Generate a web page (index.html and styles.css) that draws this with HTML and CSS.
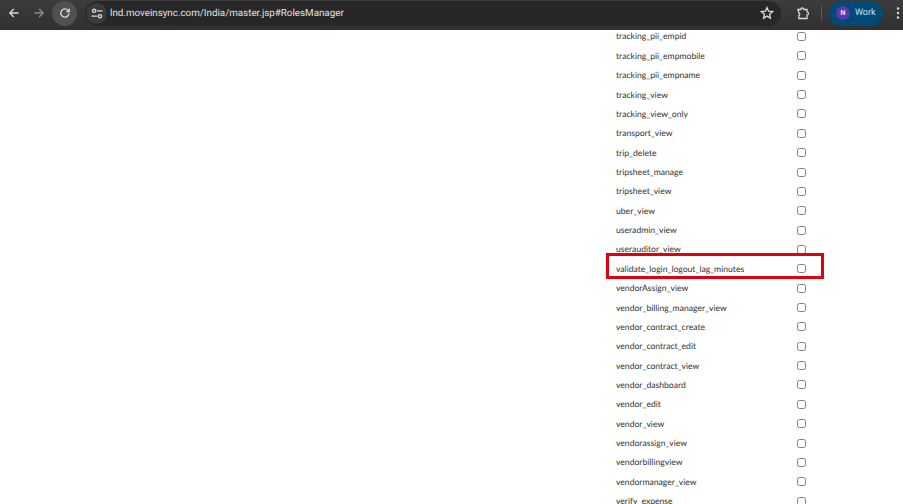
FILE: index.html
```html
<!DOCTYPE html>
<html lang="en">
<head>
<meta charset="utf-8">
<title>Roles Manager</title>
<link rel="stylesheet" href="styles.css">
</head>
<body>
<header class="toolbar">
  <svg class="nav back" viewBox="0 0 12 12"><path d="M10.5 6H2M5.8 2 1.8 6l4 4"/></svg>
  <svg class="nav forward" viewBox="0 0 12 12"><path d="M1.5 6H10M6.2 2l4 4-4 4"/></svg>
  <span class="reload"><svg viewBox="0 0 12 12"><path d="M10 6.2A4.1 4.1 0 1 1 8.9 3.2L10 4.3M10.2 1.6v3H7.2"/></svg></span>
  <div class="omnibox">
    <span class="chip"><svg class="tune" viewBox="0 0 12 11"><circle cx="3" cy="2.8" r="1.6"/><path d="M5.6 2.8H11.5M.5 8.2h5.9"/><circle cx="9" cy="8.2" r="1.6"/></svg></span>
    <span class="url">lnd.moveinsync.com/India/master.jsp#RolesManager</span>
    <svg class="star" viewBox="0 0 14 14"><path d="M7 1.6 8.6 5.2l3.9.4-2.9 2.6.8 3.9L7 10.1l-3.4 2 .8-3.9-2.9-2.6 3.9-.4z"/></svg>
  </div>
  <svg class="ext" viewBox="0 0 14 14"><path d="M2 3.5h2.9a1.5 1.5 0 0 1 3 0h3.1v2.4a1.5 1.5 0 0 1 0 3v3.6H2.8v-2.8a1.6 1.6 0 0 0 0-2.9z"/></svg>
  <span class="divider"></span>
  <div class="profile"><span class="avatar">N</span><span class="profile-name">Work</span></div>
  <svg class="menu" viewBox="0 0 4 14"><circle cx="2" cy="2.5" r="1.2"/><circle cx="2" cy="7" r="1.2"/><circle cx="2" cy="11.5" r="1.2"/></svg>
</header>
<main class="page">
  <ul class="roles">
    <li class="role"><span>tracking_pii_empid</span><span class="check"></span></li>
    <li class="role"><span>tracking_pii_empmobile</span><span class="check"></span></li>
    <li class="role"><span>tracking_pii_empname</span><span class="check"></span></li>
    <li class="role"><span>tracking_view</span><span class="check"></span></li>
    <li class="role"><span>tracking_view_only</span><span class="check"></span></li>
    <li class="role"><span>transport_view</span><span class="check"></span></li>
    <li class="role"><span>trip_delete</span><span class="check"></span></li>
    <li class="role"><span>tripsheet_manage</span><span class="check"></span></li>
    <li class="role"><span>tripsheet_view</span><span class="check"></span></li>
    <li class="role"><span>uber_view</span><span class="check"></span></li>
    <li class="role"><span>useradmin_view</span><span class="check"></span></li>
    <li class="role"><span>userauditor_view</span><span class="check"></span></li>
    <li class="role"><span>validate_login_logout_lag_minutes</span><span class="check"></span></li>
    <li class="role"><span>vendorAssign_view</span><span class="check"></span></li>
    <li class="role"><span>vendor_billing_manager_view</span><span class="check"></span></li>
    <li class="role"><span>vendor_contract_create</span><span class="check"></span></li>
    <li class="role"><span>vendor_contract_edit</span><span class="check"></span></li>
    <li class="role"><span>vendor_contract_view</span><span class="check"></span></li>
    <li class="role"><span>vendor_dashboard</span><span class="check"></span></li>
    <li class="role"><span>vendor_edit</span><span class="check"></span></li>
    <li class="role"><span>vendor_view</span><span class="check"></span></li>
    <li class="role"><span>vendorassign_view</span><span class="check"></span></li>
    <li class="role"><span>vendorbillingview</span><span class="check"></span></li>
    <li class="role"><span>vendormanager_view</span><span class="check"></span></li>
    <li class="role"><span>verify_expense</span><span class="check"></span></li>
  </ul>
  <div class="highlight"></div>
</main>
</body>
</html>
```
FILE: styles.css
```css
* { box-sizing: border-box; }
html, body { margin: 0; height: 100%; overflow: hidden; background: #fff; }
body { font-family: "Lato", "Liberation Sans", sans-serif; display: flex; flex-direction: column; text-rendering: geometricPrecision; }

.toolbar {
  height: 30px;
  flex: none;
  display: flex;
  align-items: center;
  background: linear-gradient(#3c3c3c, #303030);
  position: relative;
  z-index: 2;
  padding: 0 0 4px 8px;
}
.toolbar svg { fill: none; stroke: #dadada; stroke-width: 1.3; }
.nav { width: 12px; height: 12px; flex: none; }
.forward { margin-left: 13px; stroke: #8c8c8c !important; }
.reload {
  width: 25px; height: 25px; margin-left: 7px; flex: none;
  border-radius: 50%; background: #505050;
  display: flex; align-items: center; justify-content: center;
}
.reload svg { width: 12px; height: 12px; }
.omnibox {
  width: 696px; height: 25px; margin-left: 8px; flex: none;
  border-radius: 13px; background: #272727;
  display: flex; align-items: center;
  padding-left: 1px; padding-right: 7px;
}
.chip {
  width: 21px; height: 21px; flex: none; border-radius: 50%; background: #3a3a3a;
  display: flex; align-items: center; justify-content: center;
}
.tune { width: 12px; height: 11px; flex: none; }
.url { margin-left: 3px; font: 9.8px "Roboto", "Liberation Sans", sans-serif; color: #e4e4e4; white-space: nowrap; flex: 1; }
.star { width: 14px; height: 14px; flex: none; }
.ext { width: 14px; height: 14px; margin-left: 15px; flex: none; }
.divider { width: 1px; height: 15px; background: #5a5a5a; margin-left: 11px; flex: none; }
.profile {
  width: 54px; height: 25px; margin-left: 7px; flex: none;
  border-radius: 13px; background: #004a77;
  display: flex; align-items: center; padding-left: 7px; gap: 5px;
}
.avatar {
  width: 14px; height: 14px; border-radius: 50%; background: #5e35b1; color: #e8e0f5;
  font: 700 7px "Roboto", sans-serif;
  display: flex; align-items: center; justify-content: center;
}
.profile-name { font: 9px "Roboto", sans-serif; color: #c6e4f7; }
.menu { width: 4px; height: 14px; margin-left: 13px; flex: none; fill: #dadada !important; stroke: none !important; }

.page { flex: 1; position: relative; overflow: hidden; }
.roles {
  list-style: none;
  margin: -3.2px 0 0;
  padding: 0 0 0 616px;
  width: 806px;
}
.role {
  height: 19.37px;
  display: flex;
  align-items: center;
  justify-content: space-between;
  font-size: 8.6px;
  line-height: 11px;
  color: #333;
  white-space: nowrap;
}
.role span:first-child { position: relative; top: 0.5px; }
.check {
  width: 9px; height: 9px; flex: none;
  border: 1px solid #808080; border-radius: 2.5px; background: #fff;
}
.highlight {
  position: absolute;
  left: 606px; top: 223px;
  width: 218px; height: 26px;
  border: 3px solid #e1000f;
}
```
